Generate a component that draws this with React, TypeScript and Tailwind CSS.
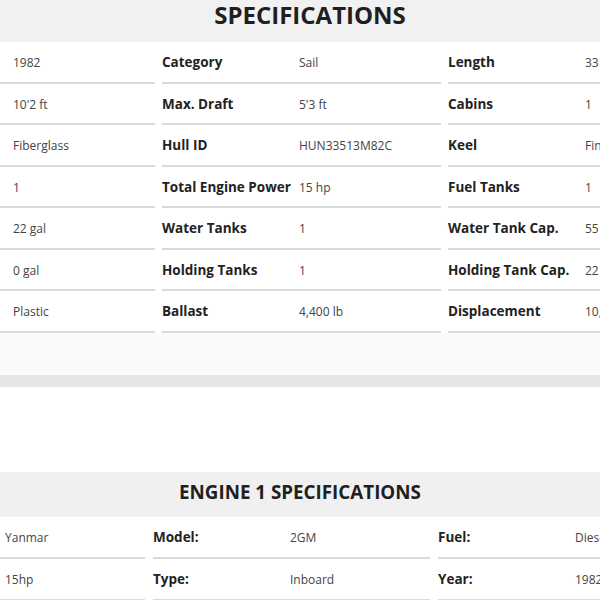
import React from 'react'

type Spec = { label: string; value: string }

const specs: Spec[][] = [
  [
    { label: 'Year', value: '1982' },
    { label: 'Category', value: 'Sail' },
    { label: 'Length', value: "33 ft" },
  ],
  [
    { label: 'Beam', value: "10'2 ft" },
    { label: 'Max. Draft', value: "5'3 ft" },
    { label: 'Cabins', value: '1' },
  ],
  [
    { label: 'Hull Material', value: 'Fiberglass' },
    { label: 'Hull ID', value: 'HUN33513M82C' },
    { label: 'Keel', value: 'Fin' },
  ],
  [
    { label: 'Engines', value: '1' },
    { label: 'Total Engine Power', value: '15 hp' },
    { label: 'Fuel Tanks', value: '1' },
  ],
  [
    { label: 'Fuel Tank Cap.', value: '22 gal' },
    { label: 'Water Tanks', value: '1' },
    { label: 'Water Tank Cap.', value: '55 gal' },
  ],
  [
    { label: 'Fresh Water', value: '0 gal' },
    { label: 'Holding Tanks', value: '1' },
    { label: 'Holding Tank Cap.', value: '22 gal' },
  ],
  [
    { label: 'Hull Shape', value: 'Plastic' },
    { label: 'Ballast', value: '4,400 lb' },
    { label: 'Displacement', value: '10,000 lb' },
  ],
]

const engine: Spec[][] = [
  [
    { label: 'Make:', value: 'Yanmar' },
    { label: 'Model:', value: '2GM' },
    { label: 'Fuel:', value: 'Diesel' },
  ],
  [
    { label: 'Power:', value: '15hp' },
    { label: 'Type:', value: 'Inboard' },
    { label: 'Year:', value: '1982' },
  ],
]

function Cell({ spec, height, nudge }: { spec: Spec; height: string; nudge: string }) {
  return (
    <div className={`flex items-center border-b-2 border-[#dadada] ${height}`}>
      <div className={`flex items-baseline leading-[18px] ${nudge}`}>
        <div className="w-[137px] shrink-0 whitespace-nowrap text-[13.5px] font-bold text-[#222]">
          {spec.label}
        </div>
        <div className="whitespace-nowrap text-[12px] text-[#444]">{spec.value}</div>
      </div>
    </div>
  )
}

export default function App() {
  return (
    <div className="w-[600px] h-[600px] overflow-hidden bg-white font-['Open_Sans',sans-serif]">
      <div className="h-[42px] bg-[#f1f1f1] pt-[1px] pl-[20px] text-center">
        <h2 className="text-[24px] leading-[28px] font-bold text-[#1f1f1f]">SPECIFICATIONS</h2>
      </div>

      <div className="ml-[-124px] w-[851px]">
        {specs.map((row, i) => (
          <div key={i} className="grid grid-cols-3 gap-x-[7px]">
            {row.map((s) => (
              <Cell key={s.label} spec={s} height="h-[41.5px]" nudge="mt-[2px]" />
            ))}
          </div>
        ))}
      </div>

      <div className="h-[42px] bg-[#fafafa]" />
      <div className="h-[12.5px] bg-[#e6e6e6]" />
      <div className="h-[85px] bg-white" />

      <div className="flex h-[45px] items-center justify-center bg-[#f0f0f0] pb-[4px]">
        <h2 className="text-[18.8px] font-bold text-[#1f1f1f]">ENGINE 1 SPECIFICATIONS</h2>
      </div>

      <div className="ml-[-132px] w-[847px]">
        {engine.map((row, i) => (
          <div key={i} className="grid grid-cols-3 gap-x-[8px]">
            {row.map((s) => (
              <Cell key={s.label} spec={s} height="h-[42px]" nudge="mt-0" />
            ))}
          </div>
        ))}
      </div>
    </div>
  )
}
